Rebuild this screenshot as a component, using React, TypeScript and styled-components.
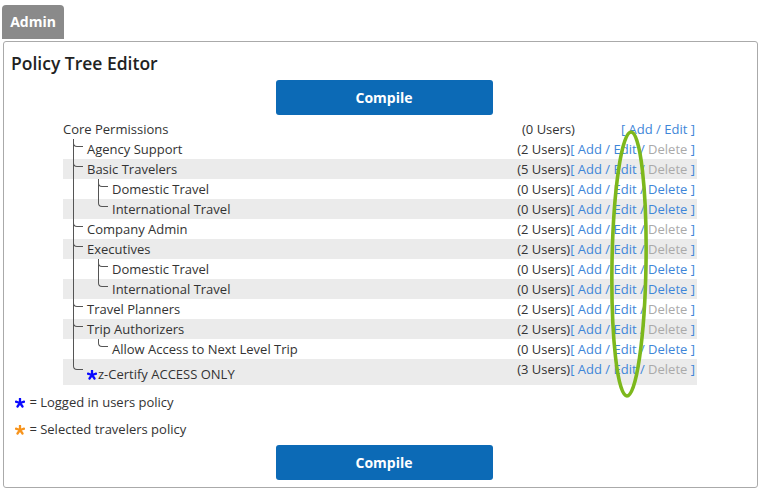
import React from "react";
import styled, { createGlobalStyle, css } from "styled-components";

type Policy = {
  name: string;
  level: 0 | 1 | 2;
  users: number;
  canDelete?: boolean;
  last?: boolean;
  starred?: boolean;
};

const policies: Policy[] = [
  { name: "Core Permissions", level: 0, users: 0 },
  { name: "Agency Support", level: 1, users: 2 },
  { name: "Basic Travelers", level: 1, users: 5 },
  { name: "Domestic Travel", level: 2, users: 0, canDelete: true },
  { name: "International Travel", level: 2, users: 0, canDelete: true, last: true },
  { name: "Company Admin", level: 1, users: 2 },
  { name: "Executives", level: 1, users: 2 },
  { name: "Domestic Travel", level: 2, users: 0, canDelete: true },
  { name: "International Travel", level: 2, users: 0, canDelete: true, last: true },
  { name: "Travel Planners", level: 1, users: 2 },
  { name: "Trip Authorizers", level: 1, users: 2 },
  { name: "Allow Access to Next Level Trip", level: 2, users: 0, canDelete: true, last: true },
  { name: "z-Certify ACCESS ONLY", level: 1, users: 3, last: true, starred: true },
];

const Star = ({ color }: { color: string }) => (
  <StarSvg viewBox="0 0 10 10" width="10" height="10">
    <g stroke={color} strokeWidth="2.3" strokeLinecap="round">
      <line x1="5" y1="5" x2="5" y2="0.8" />
      <line x1="5" y1="5" x2="9.1" y2="3.7" />
      <line x1="5" y1="5" x2="7.5" y2="8.5" />
      <line x1="5" y1="5" x2="2.5" y2="8.5" />
      <line x1="5" y1="5" x2="0.9" y2="3.7" />
    </g>
  </StarSvg>
);

const Actions = ({ withDelete, canDelete }: { withDelete: boolean; canDelete?: boolean }) => (
  <ActionsCell>
    {"[ "}
    <ActionLink>Add</ActionLink>
    {" / "}
    <ActionLink>Edit</ActionLink>
    {withDelete && (
      <>
        {" / "}
        <ActionLink $disabled={!canDelete}>Delete</ActionLink>
      </>
    )}
    {" ]"}
  </ActionsCell>
);

const App = () => {
  return (
    <Page>
      <GlobalStyle />
      <Tab>Admin</Tab>
      <Panel>
        <Title>Policy Tree Editor</Title>
        <ButtonRow>
          <CompileButton>Compile</CompileButton>
        </ButtonRow>
        <Tree>
          {policies.map((p, i) => (
            <Row key={i} $shaded={i > 0 && i % 2 === 0} $tall={p.starred}>
              <NameCell>
                {p.level >= 1 && (
                  <Connector $left={10} $through={p.level === 2 || !p.last} $hook={p.level === 1} />
                )}
                {p.level === 2 && <Connector $left={11} $width={25} $through={!p.last} $hook />}
                <Name $tall={p.starred}>
                  {p.starred && <Star color="#0a0aff" />}
                  {p.name}
                </Name>
              </NameCell>
              <UsersCell $core={p.level === 0}>({p.users} Users)</UsersCell>
              <Actions withDelete={p.level > 0} canDelete={p.canDelete} />
            </Row>
          ))}
        </Tree>
        <Legend>
          <LegendLine>
            <Star color="#0a0aff" /> = Logged in users policy
          </LegendLine>
          <LegendLine>
            <Star color="#f7941d" /> = Selected travelers policy
          </LegendLine>
        </Legend>
        <ButtonRow $spaced>
          <CompileButton>Compile</CompileButton>
        </ButtonRow>
      </Panel>
      <Highlight viewBox="0 0 46 272" width="46" height="272">
        <ellipse
          cx="23"
          cy="136"
          rx="17"
          ry="132"
          fill="none"
          stroke="#7db81c"
          strokeWidth="3.6"
          transform="rotate(0.9 23 136)"
        />
      </Highlight>
    </Page>
  );
};

const GlobalStyle = createGlobalStyle`
  body {
    margin: 0;
    font-family: "Open Sans", "Noto Sans", sans-serif;
    color: #333;
    background: #fff;
  }
`;

const Page = styled.div`
  position: relative;
  width: 759px;
  height: 491px;
  box-sizing: border-box;
  padding: 5px 0 0 2px;
`;

const Tab = styled.div`
  width: 62px;
  height: 34px;
  background: #8a8a8a;
  color: #fff;
  font-size: 14px;
  font-weight: 700;
  line-height: 34px;
  text-align: center;
  border-radius: 4px 4px 0 0;
`;

const Panel = styled.div`
  box-sizing: border-box;
  width: 755px;
  height: 447px;
  margin: 2px 0 0 1px;
  padding: 9px 0 0 7px;
  border: 1px solid #aaa;
  border-radius: 3px;
`;

const Title = styled.h1`
  margin: 0 0 5px;
  font-size: 17.5px;
  font-weight: 600;
  line-height: 24px;
  color: #222;
`;

const ButtonRow = styled.div<{ $spaced?: boolean }>`
  display: flex;
  justify-content: center;
  margin-top: ${(p) => (p.$spaced ? 6 : 0)}px;
`;

const CompileButton = styled.button`
  width: 217px;
  height: 35px;
  border: none;
  border-radius: 3px;
  background: #0c6ab6;
  color: #fff;
  font-family: "Open Sans", sans-serif;
  font-size: 14px;
  font-weight: 700;
  cursor: pointer;
`;

const Tree = styled.div`
  width: 634px;
  margin: 4px 0 0 52px;
  font-size: 13px;
`;

const Row = styled.div<{ $shaded?: boolean; $tall?: boolean }>`
  display: flex;
  align-items: flex-start;
  height: ${(p) => (p.$tall ? 26 : 20)}px;
  line-height: 20px;
  background: ${(p) => (p.$shaded ? "#ebebeb" : "transparent")};
`;

const NameCell = styled.div`
  flex: 1;
  display: flex;
  align-self: stretch;
`;

const Connector = styled.span<{ $left: number; $width?: number; $through?: boolean; $hook?: boolean }>`
  position: relative;
  flex: none;
  width: ${(p) => p.$width ?? 24}px;

  ${(p) =>
    p.$through &&
    css`
      &::before {
        content: "";
        position: absolute;
        left: ${p.$left}px;
        top: 0;
        bottom: 0;
        border-left: 1px solid #555;
      }
    `}

  ${(p) =>
    p.$hook &&
    css`
      &::after {
        content: "";
        position: absolute;
        left: ${p.$left}px;
        top: 0;
        width: 9px;
        height: calc(50% - 3px);
        border-left: 1px solid #555;
        border-bottom: 1px solid #555;
        border-bottom-left-radius: 4px;
      }
    `}
`;

const Name = styled.span<{ $tall?: boolean }>`
  padding-top: ${(p) => (p.$tall ? 5 : 0)}px;
  white-space: nowrap;
`;

const StarSvg = styled.svg`
  display: inline-block;
  vertical-align: -1px;
  margin-right: 1px;
`;

const UsersCell = styled.span<{ $core?: boolean }>`
  margin-right: ${(p) => (p.$core ? 46 : 0)}px;
  white-space: nowrap;
`;

const ActionsCell = styled.span`
  padding-right: 2px;
  color: #3e86d8;
  white-space: pre;
`;

const ActionLink = styled.a<{ $disabled?: boolean }>`
  color: ${(p) => (p.$disabled ? "#aaa" : "#3e86d8")};
  cursor: ${(p) => (p.$disabled ? "default" : "pointer")};
`;

const Legend = styled.div`
  margin: 7px 0 0 4px;
  display: flex;
  flex-direction: column;
  gap: 7px;
  font-size: 13px;
`;

const LegendLine = styled.div`
  line-height: 20px;
`;

const Highlight = styled.svg`
  position: absolute;
  left: 606px;
  top: 128px;
  pointer-events: none;
`;

export default App;
